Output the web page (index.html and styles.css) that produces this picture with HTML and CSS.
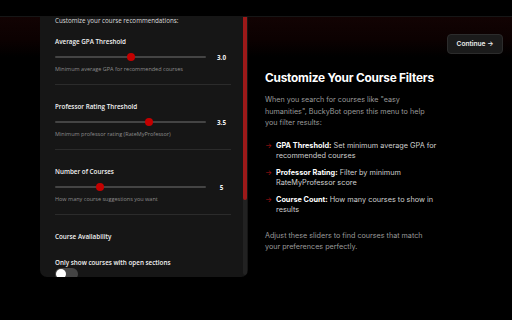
FILE: index.html
```html
<!DOCTYPE html>
<html>
<head>
<meta charset="utf-8">
<link rel="stylesheet" href="styles.css">
</head>
<body>
<div class="topbar"></div>
<div class="main">
  <div class="panel">
    <div class="panel-inner">
      <p class="intro">Customize your course recommendations:</p>
      <div class="setting first">
        <div class="label">Average GPA Threshold</div>
        <div class="slider-row">
          <div class="track"><span class="thumb" style="left: 50%"></span></div>
          <span class="value">3.0</span>
        </div>
        <div class="help">Minimum average GPA for recommended courses</div>
      </div>
      <div class="setting">
        <div class="label">Professor Rating Threshold</div>
        <div class="slider-row">
          <div class="track"><span class="thumb" style="left: 62%"></span></div>
          <span class="value">3.5</span>
        </div>
        <div class="help">Minimum professor rating (RateMyProfessor)</div>
      </div>
      <div class="setting">
        <div class="label">Number of Courses</div>
        <div class="slider-row">
          <div class="track"><span class="thumb" style="left: 29.5%"></span></div>
          <span class="value">5</span>
        </div>
        <div class="help">How many course suggestions you want</div>
      </div>
      <div class="setting last">
        <div class="label">Course Availability</div>
        <div class="label toggle-label">Only show courses with open sections</div>
        <div class="toggle"><span class="knob"></span></div>
      </div>
    </div>
    <div class="scrollbar"><div class="scroll-thumb"></div></div>
  </div>
  <div class="info">
    <div class="actions"><button class="continue">Continue →</button></div>
    <div class="copy">
      <h1>Customize Your Course Filters</h1>
      <p class="para">When you search for courses like "easy humanities", BuckyBot opens this menu to help you filter results:</p>
      <ul class="list">
        <li><span class="arrow">→</span><span class="item"><b>GPA Threshold:</b> Set minimum average GPA for recommended courses</span></li>
        <li><span class="arrow">→</span><span class="item"><b>Professor Rating:</b> Filter by minimum RateMyProfessor score</span></li>
        <li><span class="arrow">→</span><span class="item"><b>Course Count:</b> How many courses to show in results</span></li>
      </ul>
      <p class="para end">Adjust these sliders to find courses that match your preferences perfectly.</p>
    </div>
  </div>
</div>
</body>
</html>
```
FILE: styles.css
```css
* { box-sizing: border-box; }
html, body { margin: 0; padding: 0; }
body {
  width: 512px;
  height: 320px;
  overflow: hidden;
  background: #000;
  color: #fff;
  font-family: "Open Sans", "Noto Sans", sans-serif;
}
.topbar {
  height: 17px;
  background: #000;
  border-bottom: 1px solid #161616;
}
.main {
  display: flex;
  height: 303px;
  padding-left: 40px;
  background: linear-gradient(to bottom, #120303 0px, #0c0101 22px, #000 40px);
}
.panel {
  width: 208px;
  height: 260px;
  background: #161616;
  border-radius: 0 0 7px 7px;
  position: relative;
  overflow: hidden;
  display: flex;
}
.panel-inner {
  flex: 1;
  padding: 0 20px 0 15px;
}
.intro {
  margin: 0;
  font-size: 6.25px;
  line-height: 7px;
  color: #dcdcdc;
}
.setting {
  padding: 17px 0 10.5px;
  border-bottom: 1px solid #2b2b2b;
}
.setting.first { padding-top: 12.5px; }
.setting.last { border-bottom: none; padding-top: 17px; }
.label {
  font-size: 6.3px;
  line-height: 9px;
  font-weight: 600;
  color: #f2f2f2;
}
.slider-row {
  display: flex;
  align-items: center;
  margin-top: 5.5px;
  height: 12px;
}
.track {
  width: 151px;
  height: 2.5px;
  border-radius: 2px;
  background: #444;
  position: relative;
}
.thumb {
  position: absolute;
  top: 50%;
  width: 8px;
  height: 8px;
  margin: -4px 0 0 -4px;
  border-radius: 50%;
  background: #c40000;
}
.value {
  width: 19px;
  margin-left: 6px;
  text-align: center;
  font-size: 6.3px;
  font-weight: 700;
  color: #f5f5f5;
}
.help {
  margin-top: 2px;
  font-size: 5.5px;
  line-height: 8px;
  color: #8c8c8c;
}
.toggle-label { margin-top: 17px; }
.toggle {
  margin-top: 1.5px;
  width: 23px;
  height: 12px;
  border-radius: 6px;
  background: #444;
  position: relative;
}
.knob {
  position: absolute;
  left: 1px;
  top: 1px;
  width: 10px;
  height: 10px;
  border-radius: 50%;
  background: #fff;
}
.scrollbar {
  position: absolute;
  right: 1px;
  top: 0;
  bottom: 2px;
  width: 4px;
  background: #222;
  border-radius: 0 0 2px 2px;
}
.scroll-thumb {
  height: 183px;
  background: #9c1919;
  border-radius: 0 0 2px 2px;
}
.info {
  flex: 1;
  padding: 17px 9px 0 17px;
  font-family: "Inter", "Liberation Sans", sans-serif;
}
.actions {
  display: flex;
  justify-content: flex-end;
}
.continue {
  width: 56px;
  height: 20px;
  background: #1b1b1b;
  border: 1px solid #2c2c2c;
  border-radius: 4px;
  color: #eee;
  font-family: "Inter", sans-serif;
  font-size: 6.6px;
  font-weight: 600;
  padding: 0;
}
.copy { width: 172px; margin-top: 16px; }
h1 {
  margin: 0;
  font-size: 11.8px;
  line-height: 16px;
  font-weight: 700;
  color: #fff;
  letter-spacing: -0.2px;
  white-space: nowrap;
}
.para {
  margin: 8px 0 0;
  font-size: 7.2px;
  line-height: 11.5px;
  color: #9a9a9a;
}
.list {
  list-style: none;
  margin: 12px 0 0;
  padding: 0;
}
.list li {
  display: flex;
  font-size: 7.3px;
  line-height: 10px;
  color: #cfcfcf;
  margin-bottom: 7px;
}
.item { flex: 1; }
.list b { color: #fff; font-weight: 700; }
.arrow {
  color: #b01515;
  width: 11px;
  flex: none;
}
.para.end { margin-top: 15px; }
```
